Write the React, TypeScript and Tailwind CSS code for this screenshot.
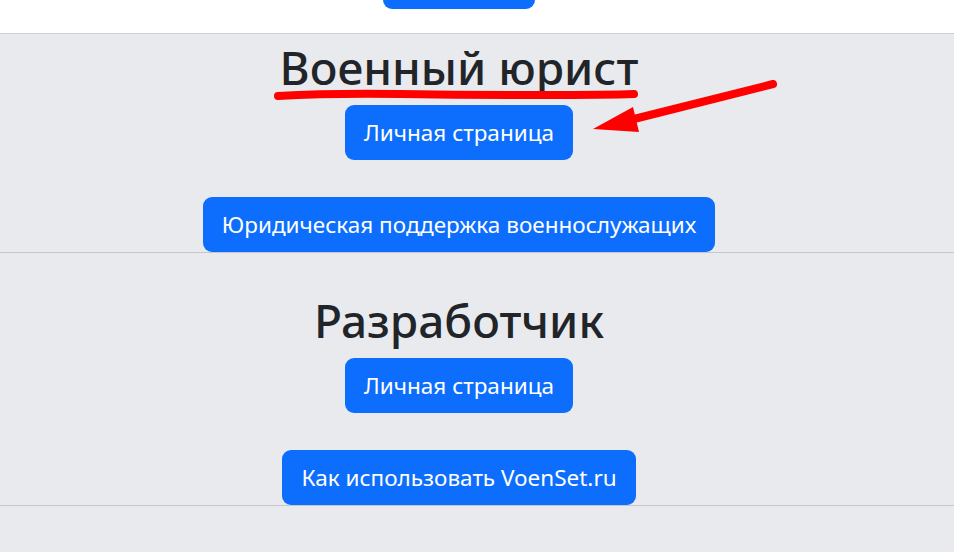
const font = { fontFamily: '"Noto Sans", "Open Sans", sans-serif' };

function Btn({ children }: { children: React.ReactNode }) {
  return (
    <button className="inline-flex h-[55px] items-center justify-center rounded-[9px] bg-[#0d6efd] px-[19px] text-[22.5px] text-white">
      {children}
    </button>
  );
}

function Section({ title, link, extra, top }: { title: string; link: string; extra: string; top: string }) {
  return (
    <section className={`flex flex-col items-center border-b border-[#c6c7cb] bg-[#e9eaee] pr-[36px] ${top}`}>
      <h1 className="mb-[5px] text-[46px] leading-[66px] font-medium text-[#212529]">{title}</h1>
      <Btn>{link}</Btn>
      <div className="mt-[37px]">
        <Btn>{extra}</Btn>
      </div>
    </section>
  );
}

export default function App() {
  return (
    <div className="relative h-[552px] w-full overflow-hidden bg-[#e9eaee]" style={font}>
      <div className="flex h-[34px] items-end justify-center overflow-hidden border-b border-[#cfcfcf] bg-white pr-[36px] pb-[24px]">
        <div className="h-[55px] w-[152px] shrink-0 rounded-[9px] bg-[#0d6efd]" />
      </div>
      <Section title="Военный юрист" link="Личная страница" extra="Юридическая поддержка военнослужащих" top="pt-0" />
      <Section title="Разработчик" link="Личная страница" extra="Как использовать VoenSet.ru" top="pt-[34px]" />
      <svg className="pointer-events-none absolute inset-0" width="954" height="552" viewBox="0 0 954 552">
        <path d="M278 96 Q 330 93 400 94 T 540 95 T 634 94" fill="none" stroke="#ff0000" strokeWidth="8" strokeLinecap="round" />
        <path d="M773 84 L 630 120" fill="none" stroke="#ff0000" strokeWidth="8" strokeLinecap="round" />
        <path d="M593 129 L 633 107 L 639 132 Z" fill="#ff0000" />
      </svg>
    </div>
  );
}
